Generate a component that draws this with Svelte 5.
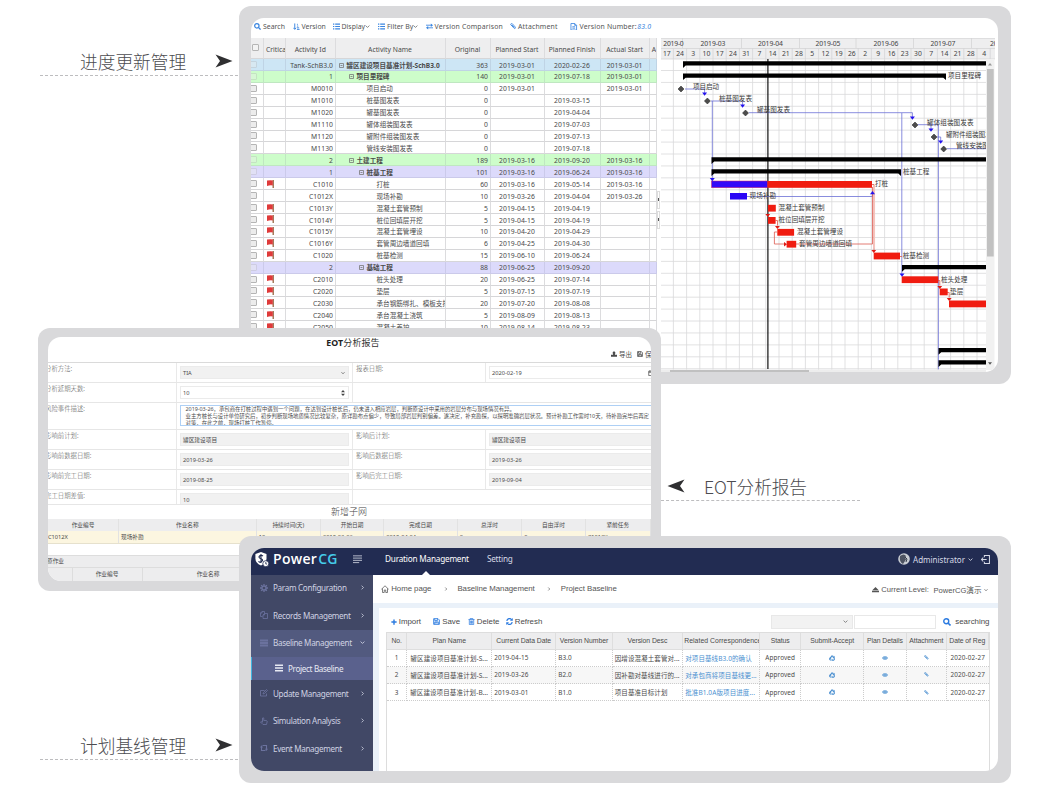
<script>
  const acts = [
    ['', 'Tank-SchB3.0', 0, '罐区建设项目基准计划-SchB3.0', '363', '2019-03-01', '2020-02-26', '2019-03-01', 'blue'],
    ['', '1', 1, '项目里程碑', '140', '2019-03-01', '2019-07-18', '2019-03-01', 'green'],
    ['', 'M0010', 3, '项目启动', '0', '2019-03-01', '', '2019-03-01', ''],
    ['', 'M1010', 3, '桩基图发表', '0', '', '2019-03-15', '', ''],
    ['', 'M1020', 3, '罐基图发表', '0', '', '2019-04-04', '', ''],
    ['', 'M1110', 3, '罐体组装图发表', '0', '', '2019-07-03', '', ''],
    ['', 'M1120', 3, '罐附件组装图发表', '0', '', '2019-07-13', '', ''],
    ['', 'M1130', 3, '管线安装图发表', '0', '', '2019-07-18', '', ''],
    ['', '2', 1, '土建工程', '189', '2019-03-16', '2019-09-20', '2019-03-16', 'green'],
    ['', '1', 2, '桩基工程', '101', '2019-03-16', '2019-06-24', '2019-03-16', 'violet'],
    ['f', 'C1010', 4, '打桩', '60', '2019-03-16', '2019-05-14', '2019-03-16', ''],
    ['', 'C1012X', 4, '现场补勘', '10', '2019-03-26', '2019-04-04', '2019-03-26', ''],
    ['f', 'C1013Y', 4, '混凝土套管预制', '5', '2019-04-15', '2019-04-19', '', ''],
    ['f', 'C1014Y', 4, '桩位回填层开挖', '5', '2019-04-15', '2019-04-19', '', ''],
    ['f', 'C1015Y', 4, '混凝土套管埋设', '10', '2019-04-20', '2019-04-29', '', ''],
    ['f', 'C1016Y', 4, '套管周边墙道回填', '6', '2019-04-25', '2019-04-30', '', ''],
    ['f', 'C1020', 4, '桩基检测', '15', '2019-06-10', '2019-06-24', '', ''],
    ['', '2', 2, '基础工程', '88', '2019-06-25', '2019-09-20', '', 'violet'],
    ['f', 'C2010', 4, '桩头处理', '20', '2019-06-25', '2019-07-14', '', ''],
    ['f', 'C2020', 4, '垫层', '5', '2019-07-15', '2019-07-19', '', ''],
    ['f', 'C2030', 4, '承台钢筋绑扎、模板支撑', '20', '2019-07-20', '2019-08-08', '', ''],
    ['f', 'C2040', 4, '承台混凝土浇筑', '5', '2019-08-09', '2019-08-13', '', ''],
    ['f', 'C2050', 4, '混凝土养护', '10', '2019-08-14', '2019-08-23', '', ''],
  ];
  const indent = [3, 13, 23, 31, 41];
  const days = ['17','24','3','10','17','24','31','7','14','21','28','5','12','19','26','2','9','16','23','30','7','14','21','28','4'];
  const months = [[673.5, '2019-0', 20.5], [713, '2019-03', 25], [770.5, '2019-04', 25], [828, '2019-05', 25], [886, '2019-06', 25], [943, '2019-07', 25], [1002.5, '2019-08', 25]];
  const monthLines = [682.5, 741.5, 799.5, 856, 913.5, 971.5];
  const gridY = Array.from({ length: 26 }, (_, i) => 70.5 + i * 11.93);
  const summaries = [[683, 61.3, 986, 0], [683, 73.4, 946, 1], [711.5, 157.2, 986, 0], [711.5, 169.2, 901, 1], [902, 265, 986, 0], [938.5, 348, 986, 0], [938.5, 360.3, 986, 0]];
  const diamonds = [[681, 89], [707.4, 101], [745.5, 113], [915, 125], [934, 137], [943.7, 149]];
  const bars = [[767.5, 181, 104.5], [768, 204.8, 7.8], [768, 217, 7.6], [777.3, 228.9, 16.8], [786.6, 240.8, 9.6], [873.7, 252.6, 26.3], [901.7, 276.3, 36.6], [939.7, 288.5, 8], [949, 300.5, 37]];
  const labels = [[948, 76, '项目里程碑', 33], [693, 86.5, '项目启动', 26], [719, 98.3, '桩基图发表', 33], [757, 110, '罐基图发表', 33], [927, 122.2, '罐体组装图发表', 46.5], [946, 134.4, '罐附件组装图发表', 52], [956, 146, '管线安装图发表', 46], [903, 171.6, '桩基工程', 26.4], [875, 183.8, '打桩', 13], [749.5, 195.6, '现场补勘', 26.5], [778.5, 208, '混凝土套管预制', 46], [778.5, 220, '桩位回填层开挖', 46], [797, 231.7, '混凝土套管埋设', 46], [799, 243.6, '套管周边墙道回填', 53], [902.7, 256, '桩基检测', 26.4], [941, 279.6, '桩头处理', 26.4], [950, 291.7, '垫层', 13.3]];
  const blueDown = [[704.6, 93], [742.6, 105], [912.4, 117], [931, 129], [940.7, 141], [712.3, 178.5], [902, 274]];
  const redDown = [[767.8, 214], [777.4, 226], [873.8, 250], [939.8, 286], [949.2, 298]];
  const side = [
    ['gear', 'Param Configuration', 0], ['copy', 'Records Management', 0], ['server', 'Baseline Management', 1],
    ['edit', 'Update Management', 0], ['hand', 'Simulation Analysis', 0], ['retweet', 'Event Management', 0],
  ];
  const plans = [
    ['1', '罐区建设项目基准计划-S...', '2019-04-15', 'B3.0', '因增设混凝土套管对...', '对项目基线B3.0的确认', '2020-02-27'],
    ['2', '罐区建设项目基准计划-S...', '2019-03-26', 'B2.0', '因补勘对基线进行的...', '对承包商将项目基线更...', '2020-02-27'],
    ['3', '罐区建设项目基准计划-B...', '2019-03-01', 'B1.0', '项目基准目标计划', '批准B1.0A版项目进度...', '2020-02-27'],
  ];
</script>

{#snippet icon(name, size)}
  <svg class="ic {name}" width={size} height={size} viewBox="0 0 16 16" fill="none" stroke="currentColor" stroke-width="2">
    {#if name === 'search'}<circle cx="6.5" cy="6.5" r="5" stroke-width="2.8" /><path d="M10 10l5 5" stroke-width="3.2" />
    {:else if name === 'sort'}<path d="M4 1v13M1 11l3 3.5 3-3.5M9 3h2M9 7h3M9 11h5M9 14.6h6" stroke-width="2.2" />
    {:else if name === 'list'}<path d="M0 2.5h3M5 2.5h11M0 8h3M5 8h11M0 13.5h3M5 13.5h11" stroke-width="2.7" />
    {:else if name === 'swap'}<path d="M0 5h13M3 11h13" /><path d="M11 1l5 4-5 4zM5 7l-5 4 5 4z" fill="currentColor" stroke="none" />
    {:else if name === 'clip'}<path d="M2 4l8 9c2 2 5-1 3-3L6 2C4 0 1 2 2 4l7 7M5 5l6 6" stroke-width="2" />
    {:else if name === 'file'}<path d="M2 1h8l4 4v10H2zM10 1v4h4M5 8h6M5 11h6" stroke-width="1.8" />
    {:else if name === 'plus'}<path d="M8 1v14M1 8h14" stroke-width="3.8" />
    {:else if name === 'save'}<path d="M1.5 1.5h10l3 3v10h-13zM4 2v4h6V2M4 14V9h8v5M5 11h5" stroke-width="2" />
    {:else if name === 'trash'}<path d="M1 3.5h14M5 3V1h6v2M3 4v11h10V4M6 6v7M8 6v7M10 6v7" stroke-width="1.7" />
    {:else if name === 'refresh'}<path d="M2 7a6 6 0 0 1 11-3M14 9a6 6 0 0 1-11 3" stroke-width="2.8" /><path d="M15.5 0v6.5H9zM.5 16V9.500H7z" fill="currentColor" stroke="none" />
    {:else if name === 'eye'}<path d="M0 8q8-11 16 0-8 11-16 0z" fill="currentColor" stroke="none" /><circle cx="8" cy="8" r="3.6" stroke="#fff" stroke-width="1.2" />
    {:else if name === 'recycle'}<path d="M4 8l3-5h3l2 3M13 7l1.500 4-2 3H9M6 13.500H3.500L1.500 11l2-4" stroke-width="2.900" /><path d="M15 2v6H9zM9.500 10v6.500L5.500 13.500zM0 8.500l5-3 1 5z" fill="currentColor" stroke="none" />
    {:else if name === 'gear'}<circle cx="8" cy="8" r="4.200" stroke-width="3" /><path d="M8 0v3M8 13v3M0 8h3M13 8h3M2.300 2.300l2 2M11.700 11.700l2 2M13.700 2.300l-2 2M4.300 11.700l-2 2" stroke-width="2.600" />
    {:else if name === 'copy'}<path d="M5 11H1V4l3-3h5v4M4 1v3H1M6 15V8l3-3h6v10zM9 5v3H6" stroke-width="1.6" />
    {:else if name === 'server'}<path d="M0 3h16M0 8h16M0 13h16" stroke-width="3.900" />
    {:else if name === 'edit'}<path d="M13 9v5H1V3h8M6 10l1-3 6-6 2 2-6 6z" stroke-width="1.7" />
    {:else if name === 'hand'}<path d="M5 10V2q1.500-2 2.500 0v5q6-1 7 1.500L13 15H6L1 10q1-2 4 1" stroke-width="1.7" />
    {:else if name === 'retweet'}<path d="M3 5v8h8M5 3h8v8" stroke-width="2.200" /><path d="M0 7l3-4.500L6 7zM10 9.500l3 4.500 3-4.500z" fill="currentColor" stroke="none" />
    {:else if name === 'home'}<path d="M0.500 9L8 1.500 15.500 9M3 7v8h3.500v-5h3v5H13V7" stroke-width="1.500" />
    {:else if name === 'eject'}<path d="M8 2l8 8H0zM0 11.500h16V14H0z" fill="currentColor" stroke="none" />
    {:else if name === 'export'}<path d="M8 0l5 6h-2.500v4h-5V6H3zM0 10h16v5H0z" fill="currentColor" stroke="none" />
    {:else if name === 'cal'}<path d="M2 3h12v12H2zM2 6h12M5 1v3M11 1v3" />
    {:else if name === 'exit'}<path d="M6 4V1h9v14H6v-3M10 8H1M4 4.500L.800 8 4 11.500" stroke-width="1.800" />
    {:else if name === 'down'}<path d="M2 5l6 6 6-6" stroke-width="2.800" />
    {:else if name === 'right'}<path d="M5 2l6 6-6 6" stroke-width="2.600" />
    {:else if name === 'menu'}<path d="M0 1.500h16M0 5.500h16M0 9.500h16M0 13.500h11" stroke-width="1.700" />
    {:else if name === 'bars'}<path d="M0 2.500h16M0 8h16M0 13.500h16" stroke-width="3.200" />
    {/if}
  </svg>
{/snippet}

{#snippet caption(text, dir, cls)}
  <div class="cap {cls}">
    {#if dir === 'l'}<svg class="arr" width="18" height="14" viewBox="0 0 18 14"><path d="M.5 7L17.500.5 13 7l4.500 6.500z" fill="#2f2f31" /></svg>{/if}
    <span>{text}</span>
    {#if dir === 'r'}<svg class="arr" width="18" height="14" viewBox="0 0 18 14"><path d="M17.500 7L.5.5 5 7 .5 13.500z" fill="#2f2f31" /></svg>{/if}
  </div>
{/snippet}

<div class="page">
  {@render caption('进度更新管理', 'r', 'c1')}
  {@render caption('EOT分析报告', 'l', 'c2')}
  {@render caption('计划基线管理', 'r', 'c3')}

  <section class="win w1">
    <div class="screen">
      <div class="tools">
        <span style="width:38.500px">{@render icon('search', 7)}Search</span>
        <span style="width:40px">{@render icon('sort', 7)}Version</span>
        <span style="width:45.500px">{@render icon('list', 7)}Display{@render icon('down', 5)}</span>
        <span style="width:47.500px">{@render icon('list', 7)}Filter By{@render icon('down', 5)}</span>
        <span class="wide" style="width:84px">{@render icon('swap', 7)}Version Comparison</span>
        <span class="wide" style="width:60.500px">{@render icon('clip', 6.5)}Attachment</span>
        <span class="wide">{@render icon('file', 7.5)}Version Number:<i>83.0</i></span>
      </div>
      <div class="split">
        <div class="grid">
          <div class="row head">
            <div><b class="cb"></b></div><div class="l">Critica</div><div>Activity Id</div><div>Activity Name</div><div>Original</div><div>Planned Start</div><div>Planned Finish</div><div>Actual Start</div><div class="l">A</div>
          </div>
          {#each acts as a}
            <div class="row {a[8]}">
              <div class="cbc"><b class="cb"></b></div>
              <div class="fl">{#if a[0]}<svg width="7" height="8" viewBox="0 0 7 8"><path d="M5.600 0h1.200v8H5.600z" fill="#8c5a33" /><path d="M0 .6Q3 0 5.800.4v5.100Q3 5 0 6z" fill="#df3a3a" /></svg>{/if}</div>
              <div class="r">{a[1]}</div>
              <div class="nm" style="padding-left:{indent[a[2]]}px">{#if a[8]}<svg width="5" height="5" viewBox="0 0 5 5"><path d="M.5.5h4v4h-4zM1.500 2.500h2" fill="none" stroke="#777" stroke-width=".8" /></svg>{/if}{a[3]}</div>
              <div class="r o">{a[4]}</div><div>{a[5]}</div><div>{a[6]}</div><div>{a[7]}</div><div></div>
            </div>
          {/each}
        </div>
        <div class="bar"><i></i><i></i></div>
        <svg class="gantt" width="338" height="334" viewBox="660 38 338 334">
          <rect x="661" y="38" width="334" height="21" fill="#eeeeef" />
          <g stroke="#d4d4d6" stroke-width=".8" fill="none">
            <path d="M661 48.500h334M661 59h334M661 38.300h334" />
            {#each monthLines as x}<path d="M{x} 38v10" />{/each}
            {#each days as _, i}<path d="M{673.400 + i * 13.2} 48v11" />{/each}
          </g>
          <g stroke="#d9d9da" stroke-width=".8" fill="none">
            {#each gridY as y}<path d="M661 {y}h325" />{/each}
            {#each days.slice(0, 24) as _, i}<path d="M{673.400 + i * 13.2} 59v311" />{/each}
          </g>
          <clipPath id="area"><rect x="661" y="38" width="325" height="332" /></clipPath>
          <clipPath id="head"><rect x="661" y="38" width="334" height="22" /></clipPath>
          <g fill="#444" font-size="6.800" text-anchor="middle" clip-path="url(#head)">
            {#each months as m}<text x={m[0]} y="45.700" textLength={m[2]}>{m[1]}</text>{/each}
            {#each days as d, i}<text x={666.800 + i * 13.220} y="56">{d}</text>{/each}
          </g>
          <path d="M767.900 59v310" stroke="#111" stroke-width="1.200" />
          <g clip-path="url(#area)">
            <g stroke="#6b70d6" stroke-width=".8" fill="none">
              <path d="M685 89h19.600v4M711 101h31.600v4M712.300 101v77M749 112.700h163.400v5M901.800 113v161M918 124.700h20.400v245M931 125v5M937 137h3.700v5M947 148.700h39M747 196.500h125.500v-4" />
            </g>
            <g stroke="#dc5a50" stroke-width=".8" fill="none">
              <path d="M796 244h76.500v-57M777 232h-2.600v12h10M872 184.500h2v66M775.500 220.500h2v5M938 280.500h1.800v5M947 292.500h2.200v5M900 256.500h2" />
              <path d="M874.300 187v61" stroke="#f4c4bd" stroke-width="1.500" />
            </g>
            {#each summaries as s}
              <path d="M{s[0]} {s[1]}H{s[2]}v{s[3] ? 6.700 : 4.300}l{s[3] ? -2.700 : 0} {s[3] ? -2.400 : 0}H{s[0] + 2.700}l-2.700 2.400z" fill="#000" />
            {/each}
            <rect x="711.500" y="181" width="56" height="6.700" fill="#3208f8" stroke="#d22860" stroke-width=".5" />
            <rect x="730" y="193" width="17" height="6.500" fill="#2b06f5" />
            {#each bars as b}<rect x={b[0]} y={b[1]} width={b[2]} height="6.800" fill="#f01c10" />{/each}
            {#each diamonds as d}<path d="M{d[0] - 3} {d[1]}l3-3 3 3-3 3z" fill="#4c4c4c" stroke="#222" stroke-width=".5" />{/each}
            {#each blueDown as p}<path d="M{p[0] - 2.500} {p[1] - .5}h5l-2.500 3.300z" fill="#2412ee" />{/each}
            {#each redDown as p}<path d="M{p[0] - 2.400} {p[1]}h4.800l-2.400 3z" fill="#e01a14" />{/each}
            <path d="M870 194.300h5l-2.500-3.300z" fill="#2412ee" /><path d="M784 242v4.400l3-2.200z" fill="#e01a14" />
            <g fill="#383838" font-size="6.600">
              {#each labels as t}<text x={t[0]} y={t[1] + 2.400} textLength={t[3]}>{t[2]}</text>{/each}
            </g>
          </g>
          <rect x="986" y="59" width="8.500" height="311" fill="#f1f1f1" />
          <rect x="987" y="69" width="6.700" height="187.500" fill="#c1c1c1" />
          <path d="M988 65.500l2-2.500 2 2.500z" fill="#999" /><path d="M988 362.300l2 2.500 2-2.500z" fill="#555" />
          <rect x="661" y="369.500" width="325" height="2.500" fill="#ededed" /><rect x="670" y="370" width="139" height="2" fill="#c0c0c0" />
        </svg>
      </div>
    </div>
  </section>

  <section class="win w2">
    <div class="screen">
      <h2><b>EOT</b>分析报告</h2>
      <div class="acts"><span>{@render icon('export', 6)}导出</span><span>{@render icon('save', 6)}保存</span></div>
      <div class="form">
        <div class="fr"><label>分析方法:</label><div class="f"><p class="in">TIA{@render icon('down', 4)}</p></div><label>报表日期:</label><div class="f"><p class="in white date">2020-02-19{@render icon('cal', 6)}</p></div></div>
        <div class="fr"><label>分析延期天数:</label><div class="f"><p class="in white">10<svg width="4" height="6" viewBox="0 0 4 6"><path d="M0 2.200L2 0l2 2.200zM0 3.800h4L2 6z" fill="#444" /></svg></p></div><label class="none"></label><div class="f"></div></div>
        <div class="fr tall"><label>风险事件描述:</label><div class="f area"><p>2019-03-26，承包商在打桩过程中遇到一个问题，在达到设计桩长后，仍未进入相应岩层，判断原设计中采用的岩层分布与现场情况有异。<br />业主方桩长与设计单位研究后，初步判断现场地质情况比较复杂，原详勘布点偏少，导致局部岩层判别偏差。遂决定，补充勘探，以探明准确岩层状况。预计补勘工作需时10天，待补勘完毕后再定<br />对策，在此之前，现场打桩工作暂停。</p></div></div>
        <div class="fr"><label>影响前计划:</label><div class="f"><p class="in">罐区建设项目</p></div><label>影响后计划:</label><div class="f"><p class="in">罐区建设项目</p></div></div>
        <div class="fr"><label>影响前数据日期:</label><div class="f"><p class="in">2019-03-26</p></div><label>影响后数据日期:</label><div class="f"><p class="in">2019-03-26</p></div></div>
        <div class="fr"><label>影响前完工日期:</label><div class="f"><p class="in">2019-08-25</p></div><label>影响后完工日期:</label><div class="f"><p class="in">2019-09-04</p></div></div>
        <div class="fr last"><label>完工日期差值:</label><div class="f"><p class="in">10</p></div><label class="none"></label><div class="f"></div></div>
      </div>
      <h3>新增子网</h3>
      <div class="net hd">{#each ['作业编号', '作业名称', '持续时间(天)', '开始日期', '完成日期', '总浮时', '自由浮时', '紧前任务'] as t}<div>{t}</div>{/each}</div>
      <div class="net yl">{#each ['C1012X', '现场补勘', '10', '2019-03-26', '2019-04-04', '0', '0', 'C1013Y'] as t}<div>{t}</div>{/each}</div>
      <div class="orig">原作业</div>
      <div class="orig2"><div></div><div>作业编号</div><div>作业名称</div></div>
    </div>
  </section>

  <section class="win w3">
    <div class="screen">
      <header>
        <svg class="logo" width="14" height="15" viewBox="0 0 14 15"><path d="M6 0l5.500 2v4.500Q11.500 11 6 13.500.4 11 .4 6.500V2z" fill="#fff" /><path d="M8 4Q6 2.500 4.500 4T6 6.700 6.500 9.500 3.800 9M6 2v9" fill="none" stroke="#222c52" stroke-width="1.100" /><circle cx="10.800" cy="11.700" r="3" fill="#fff" stroke="#222c52" stroke-width=".8" /><path d="M10.800 10v2h1.300" stroke="#222c52" stroke-width=".8" fill="none" /></svg>
        <strong>Power<em>CG</em></strong>
        <span class="mn">{@render icon('menu', 9)}</span>
        <nav><a class="on">Duration Management</a><a>Setting</a></nav>
        <div class="user"><svg width="12" height="12" viewBox="0 0 12 12"><circle cx="6" cy="6" r="5.800" fill="#c9cdd3" /><path d="M2 3q4-3 6 0l-1 2q2 1 0 3l-2 3Q1 9 2 3z" fill="#4d5361" /><path d="M7 4l2 2-1 3" stroke="#383e4c" fill="none" /></svg><span>Administrator</span>{@render icon('down', 5)}<i></i>{@render icon('exit', 9)}</div>
      </header>
      <div class="body">
        <aside>
          {#each side as s}
            <div class="it" class:open={s[2]}>{@render icon(s[0], 8)}<span>{s[1]}</span>{@render icon(s[2] ? 'down' : 'right', 5)}</div>
            {#if s[2]}<div class="sub">{@render icon('bars', 8)}<span>Project Baseline</span></div>{/if}
          {/each}
        </aside>
        <main>
          <div class="crumb">
            {@render icon('home', 8)}<span class="b1">Home page</span>{@render icon('right', 4)}<span class="b2">Baseline Management</span>{@render icon('right', 4)}<span class="b3">Project Baseline</span>
            <div class="lvl">{@render icon('eject', 7)}<span>Current Level:</span><span>PowerCG演示</span>{@render icon('down', 4)}</div>
          </div>
          <div class="panel">
            <div class="tb">
              <span style="width:42.500px">{@render icon('plus', 6)}Import</span><span style="width:34.500px">{@render icon('save', 7)}Save</span><span style="width:38px">{@render icon('trash', 7)}Delete</span><span>{@render icon('refresh', 7)}Refresh</span>
              <div class="sel">{@render icon('down', 5)}</div><div class="inp"></div><span class="srch">{@render icon('search', 8)}searching</span>
            </div>
            <div class="tbl">
              <div class="tr th"><div>No.</div><div>Plan Name</div><div>Current Data Date</div><div>Version Number</div><div>Version Desc</div><div>Related Correspondence</div><div>Status</div><div>Submit-Accept</div><div>Plan Details</div><div>Attachment</div><div>Date of Reg</div></div>
              {#each plans as p}
                <div class="tr">
                  <div>{p[0]}</div><div class="cj">{p[1]}</div><div class="lf">{p[2]}</div><div class="lf">{p[3]}</div><div class="lf cj">{p[4]}</div><div class="lf cj link">{p[5]}</div><div>Approved</div><div>{@render icon('recycle', 6)}</div><div>{@render icon('eye', 6)}</div><div>{@render icon('clip', 5)}</div><div>{p[6]}</div>
                </div>
              {/each}
            </div>
          </div>
        </main>
      </div>
    </div>
  </section>
</div>

<style>
  :global(body) { margin: 0; background: #fff; }
  .page { position: relative; width: 1046px; height: 796px; overflow: hidden; font-family: "Noto Sans", "Noto Sans CJK SC", sans-serif; color: #4a4a4a; }
  .page * { box-sizing: border-box; }
  .ic { flex: none; display: block; }
  h2, h3, p { margin: 0; }

  .cap { position: absolute; display: flex; align-items: center; height: 30px; border-bottom: 1px dashed #bdbdbf; font: 300 17.700px "Noto Sans CJK SC", sans-serif; color: #4c4c50; }
  .c1 { left: 40px; top: 46px; width: 198px; padding-left: 40px; }
  .c3 { left: 40px; top: 730px; width: 198px; padding-left: 40px; }
  .c2 { left: 661px; top: 471px; width: 199px; padding-left: 6px; }
  .c1 .arr, .c3 .arr { margin-left: 28.500px; }
  .c2 .arr { margin-right: 19px; }
  .c2 span { letter-spacing: -.1px; }

  .win { position: absolute; background: #d9d9db; border-radius: 12px; }
  .screen { overflow: hidden; background: #fff; border-radius: 13px; height: 100%; }
  .w1 { left: 239px; top: 6px; width: 772px; height: 378px; padding: 12px 13px 12px 12px; }
  .w2 { left: 38px; top: 328px; width: 623px; height: 263px; padding: 9px 10px 10px 10px; }
  .w3 { left: 239px; top: 536px; width: 772px; height: 247px; padding: 12px 13px 12px 12px; }

  .tools { height: 20px; display: flex; padding: 0 0 3px 3px; font-size: 6.900px; letter-spacing: .02px; color: #555; }
  .tools span { display: flex; align-items: center; gap: 2px; white-space: nowrap; }
  .tools .wide { letter-spacing: .17px; }
  .tools i, .tools .ic { color: #3b86e0; }
  .tools i { margin-left: -1.500px; }
  .tools .down { margin-left: -2px; color: #777; }
  .split { display: flex; height: 334px; }
  .grid { width: 406px; overflow: hidden; font-size: 6.800px; letter-spacing: .04px; }
  .row { display: grid; grid-template-columns: 13px 22px 49.500px 110px 45px 54px 56px 49.200px 7.300px; height: 11.930px; background: #fff; }
  .row > div { border-right: 1px solid #dcdcde; border-bottom: 1px solid #d6d6d8; overflow: hidden; white-space: nowrap; display: flex; align-items: center; justify-content: center; line-height: 11px; padding-top: 1.200px; }
  .row > .r { justify-content: flex-end; padding-right: 1.500px; }
  .row > .l { justify-content: flex-start; padding-left: 2px; }
  .row > .nm { justify-content: flex-start; font-size: 6.600px; letter-spacing: 0; gap: 3px; }
  .row.head { height: 21px; background: #eeeeef; letter-spacing: 0; }
  .row.head > div { line-height: 19px; padding-top: 3px; }
  .row.head > div:first-child { justify-content: flex-start; padding-top: 0; }
  .row > .cbc { justify-content: flex-start; padding-top: 0; }
  .row > .fl { justify-content: flex-start; padding: 0 0 0 3px; }
  .cb { width: 7px; height: 7px; border: 1px solid #b5b5b5; border-radius: 1px; background: #f3f3f3; margin-left: 1px; }
  .cbc .cb { margin-left: -1px; background: #ececec; }
  .row.head .cb { margin-bottom: 2px; }
  .row.blue { background: #cde6f5; } .row.green { background: #cdfdca; } .row.violet { background: #dcdafb; }
  .blue .nm, .green .nm, .violet .nm { font-weight: 700; }
  .row:is(.blue, .green, .violet) > div { border-color: rgb(120 120 150 / .16); }
  .row:is(.blue, .green, .violet) .cb { opacity: .35; }
  .bar { width: 3px; padding-top: 153px; display: flex; flex-direction: column; gap: 2px; }
  .bar i { width: 3px; height: 18px; border: 1px solid #ddd; background: linear-gradient(#fff 40%, #555 40% 58%, #fff 58%); }
  .gantt { flex: none; }

  h2 { height: 11px; font: 400 9px/11px "Noto Sans CJK SC", sans-serif; text-align: center; padding-left: 7px; color: #333; letter-spacing: .1px; }
  h2 b { font: 700 8.800px "Noto Sans", sans-serif; color: #222; }
  .acts { height: 13.500px; display: flex; justify-content: flex-end; gap: 5px; font-size: 6.500px; margin-right: -7px; align-items: center; padding-bottom: 1px; }
  .acts span { display: flex; gap: 2px; align-items: center; flex: none; }
  .form { border-top: 1px solid #dadada; }
  .fr { display: grid; grid-template-columns: 129px 175.500px 133.500px 173px; height: 20px; border-bottom: 1px solid #e6e6e6; }
  .fr > * { border-right: 1px solid #e9e9e9; }
  .fr > .none { border-right: 0; }
  .fr label { font: 300 6.400px/8px "Noto Sans CJK SC", sans-serif; color: #555; padding: 2px 0 0 3.500px; white-space: nowrap; }
  .fr label:first-child { padding-left: 0; text-indent: -3px; }
  .f { padding: 3px 3px 0; }
  .in { height: 13px; background: #f1f1f1; border: 1px solid #ebebeb; display: flex; align-items: center; justify-content: space-between; padding: 1px 3px 0 2px; font-size: 5.700px; }
  .in.white { background: #fff; }
  .in.date { padding-right: 0; }
  .fr.tall { height: 27px; grid-template-columns: 129px 1fr; }
  .area { padding: 2.500px 0 0 3px; border: 0; }
  .area p { height: 21px; border: 1.500px solid #aed0f5; white-space: nowrap; overflow: hidden; font-size: 5.400px; line-height: 7.200px; padding-left: 4.500px; margin-right: -3px; letter-spacing: -.01px; }
  .fr.last { height: 15.500px; overflow: hidden; }
  h3 { height: 13.500px; font: 300 9px/13px "Noto Sans CJK SC", sans-serif; text-align: center; padding-right: 1px; color: #444; }
  .net { display: grid; grid-template-columns: 71px 137.700px 64.300px 63.300px 73.400px 64.600px 63.400px 65.300px; height: 12.500px; font-size: 5.700px; }
  .net > div { display: flex; align-items: center; justify-content: center; border-right: 1px solid #e2e2e2; }
  .hd, .orig, .orig2 { background: #ededee; }
  .yl { background: #fcf6e0; border-bottom: 1px solid #e6e1cd; }
  .yl > div { justify-content: flex-start; padding-left: 2px; }
  .yl > div:first-child { padding-left: 0; }
  .orig { margin-top: 11.500px; height: 13px; font-size: 5.700px; line-height: 11.500px; border: 1px solid #ddd; text-indent: -1px; border-left: 0; }
  .orig2 { display: grid; grid-template-columns: 24.500px 70px 132px; height: 13px; font-size: 5.700px; line-height: 13px; text-align: center; }
  .orig2 > div { border-right: 1px solid #ddd; }

  header { height: 26.500px; background: #222c52; display: flex; align-items: center; padding: 0 8px 4px 4px; color: #d7dae6; }
  .logo { margin: 0 4px 0 0; }
  strong { font: 600 14px/18px "Open Sans", sans-serif; color: #fff; width: 80px; letter-spacing: .3px; white-space: nowrap; }
  em { font-style: normal; color: #45cdea; margin-left: 1px; }
  .mn { width: 32px; opacity: .85; }
  nav { display: flex; gap: 18px; font-size: 8.200px; padding-bottom: 1px; }
  nav a { position: relative; line-height: 22.500px; letter-spacing: -.2px; }
  .on { color: #fff; }
  .on::after { content: ""; position: absolute; left: 37px; bottom: -5px; border: 4.500px solid transparent; border-bottom-color: #fff; border-top: 0; }
  .user { margin-left: auto; display: flex; align-items: center; gap: 3px; font-size: 8px; }
  .user i { width: 2px; }
  .body { display: flex; height: 196.500px; }
  aside { width: 121.700px; flex: none; background: #414866; color: #cfd2e2; font-size: 8.100px; }
  .it { height: 27.500px; display: flex; align-items: center; padding: 0 8px 1px 8.500px; gap: 5.500px; letter-spacing: -.33px; }
  .it:first-child { letter-spacing: -.3px; }
  .it span { flex: 1; white-space: nowrap; }
  .it .ic:first-child { color: #6b729e; }
  .it.open { background: #525a7f; }
  .sub { height: 23.200px; background: #5a618d; border-left: 1px solid #3fb4e0; display: flex; align-items: center; gap: 5px; padding: 0 0 1px 23px; color: #e8eaf4; letter-spacing: -.33px; }
  main { flex: 1; min-width: 0; }
  .crumb { height: 28.500px; display: flex; align-items: center; padding: 0 10px 0 8.500px; font: 7.850px "Liberation Sans", "Noto Sans CJK SC", sans-serif; color: #555; }
  .crumb span { white-space: nowrap; }
  .crumb > span { letter-spacing: -.04px; }
  .b1 { margin: 0 13px 0 2px; } .b2 { margin: 0 12.500px 0 9px; } .b3 { margin-left: 9.500px; }
  .lvl { margin-left: auto; display: flex; align-items: center; gap: 2.500px; font-size: 7.600px; padding-top: 2px; }
  .lvl span + span { margin-left: 2px; }
  .panel { border: solid #eaf1f9; border-width: 5px 0 0 6px; height: 168px; padding: 4px 8.500px 0 7.500px; display: flex; flex-direction: column; }
  .tb { height: 19.500px; display: flex; align-items: center; padding-left: 4.500px; font: 7.900px "Liberation Sans", sans-serif; color: #4a4a4a; }
  .tb span { display: flex; align-items: center; gap: 2px; }
  .tb .ic { color: #2c7be0; }
  .sel { margin-left: auto; width: 82px; height: 14px; background: #f2f2f2; border: 1px solid #e8e8e8; display: flex; align-items: center; justify-content: flex-end; padding-right: 4px; }
  .tb .sel .ic { color: #777; }
  .inp { width: 82px; height: 14px; border: 1px solid #e8e8e8; margin: 0 7px 0 1.500px; }
  .tb .srch { gap: 4px; }
  .tbl { flex: 1; border: solid #ddd; border-width: 0 1px; }
  .tr { display: grid; grid-template-columns: 20px 85px 64px 56.500px 70.500px 77px 41px 63px 42.500px 40.300px 1fr; height: 17.300px; font-size: 6.400px; letter-spacing: .1px; }
  .tr > div { border-right: 1px dotted #ccc; border-bottom: 1px dotted #ccc; display: flex; align-items: center; justify-content: center; overflow: hidden; white-space: nowrap; min-width: 0; }
  .tr > div:last-child { border-right: 0; }
  .tr > .lf { justify-content: flex-start; padding-left: 2px; }
  .tr > .cj { font-size: 6.500px; }
  .tr > .link, .tr .ic { color: #4a8fd0; }
  .tr:nth-child(3) { background: #f7f7f7; }
  .tr.th { height: 18px; background: #ededee; font: 6.850px "Liberation Sans", sans-serif; letter-spacing: -.05px; border-top: 1px solid #ddd; }
  .tr.th > div { border-style: solid; border-color: #dedede; border-width: 0 1px 1px 0; }
  .tr.th > div:nth-child(6) { justify-content: flex-start; padding-left: 1px; letter-spacing: .05px; }
</style>
